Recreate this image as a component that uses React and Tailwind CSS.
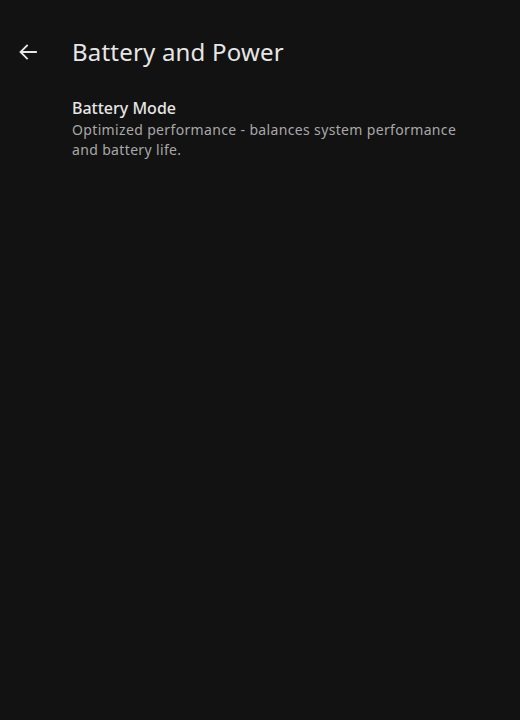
import React from 'react';

export default function App() {
  return (
    <div
      className="min-h-[720px] w-full bg-[#121212] text-[#e3e3e3]"
      style={{ fontFamily: '"Noto Sans", "Open Sans", sans-serif' }}
    >
      <div className="flex h-[96px] items-center pt-[8px]">
        <button className="ml-[16px] flex h-[24px] w-[24px] items-center justify-center text-[#e6e6e6]">
          <svg width="24" height="24" viewBox="0 0 24 24" fill="none">
            <path
              d="M20 12H5M11 5.5L4.5 12L11 18.5"
              stroke="currentColor"
              strokeWidth="1.8"
              strokeLinecap="square"
            />
          </svg>
        </button>
        <h1 className="ml-[32px] text-[24px] leading-[32px] tracking-[0.2px] text-[#e6e6e6]">
          Battery and Power
        </h1>
      </div>
      <div className="pl-[72px] pr-[48px]">
        <div className="text-[16px] font-medium leading-[24px] text-[#e6e6e6]">Battery Mode</div>
        <p className="text-[14px] leading-[20px] tracking-[0.35px] text-[#a8a8a8]">
          Optimized performance - balances system performance and battery life.
        </p>
      </div>
    </div>
  );
}
